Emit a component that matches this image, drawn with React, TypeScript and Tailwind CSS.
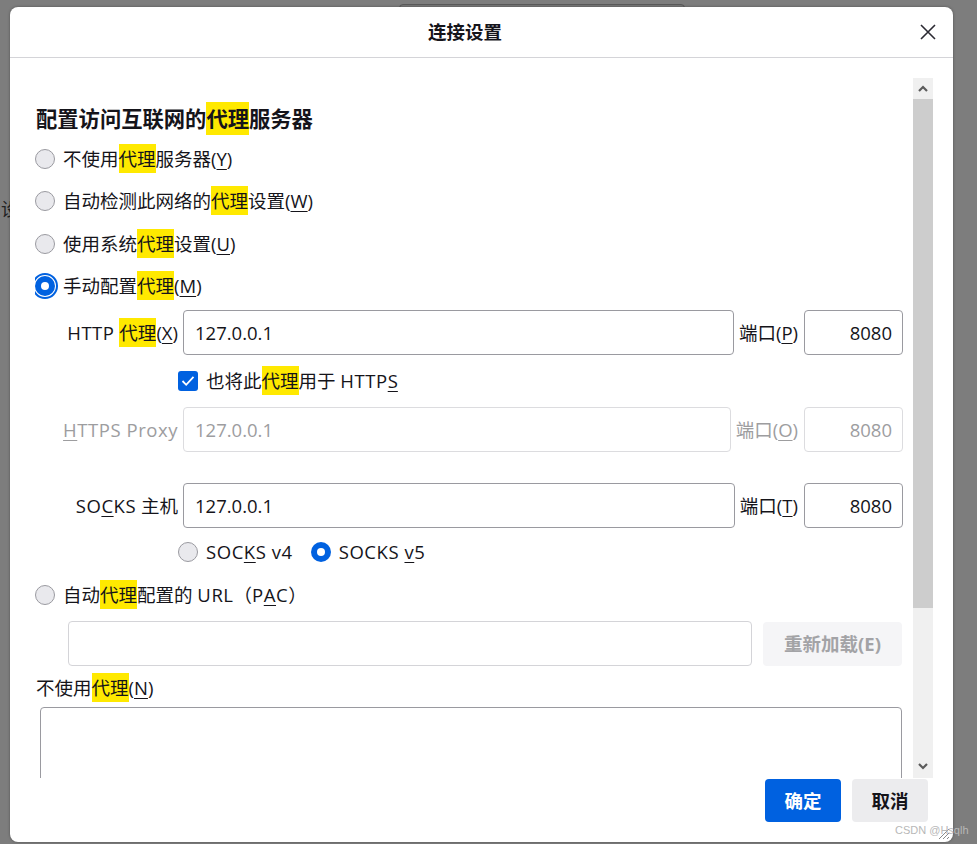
import React from "react";

const FONT = { fontFamily: '"Open Sans", "Noto Sans CJK SC", sans-serif' };

function Hl({ children }: { children: React.ReactNode }) {
  return <span className="bg-[#ffe900] py-[2px]">{children}</span>;
}

function U({ children }: { children: React.ReactNode }) {
  return <u className="underline underline-offset-[3px] decoration-1">{children}</u>;
}

function L({ children }: { children: React.ReactNode }) {
  return <span className="tracking-[0.55px]">{children}</span>;
}

function Radio({ checked = false, focus = false }: { checked?: boolean; focus?: boolean }) {
  if (checked) {
    return (
      <span
        className={
          "flex h-[20px] w-[20px] shrink-0 items-center justify-center rounded-full bg-[#0061e0] " +
          (focus ? "outline-2 outline-offset-1 outline-[#0061e0] outline" : "")
        }
      >
        <span className="h-[8px] w-[8px] rounded-full bg-white" />
      </span>
    );
  }
  return <span className="h-[20px] w-[20px] shrink-0 rounded-full border border-[#9a9aa0] bg-[#e9e9ed]" />;
}

function Chevron({ up }: { up: boolean }) {
  return (
    <svg width="10" height="7" viewBox="0 0 10 7">
      <path
        d={up ? "M1 6 L5 2 L9 6" : "M1 1 L5 5 L9 1"}
        fill="none"
        stroke="#5b5b5b"
        strokeWidth="2.2"
      />
    </svg>
  );
}

function ProxyRow({
  label,
  portLabel,
  disabled = false,
}: {
  label: React.ReactNode;
  portLabel: React.ReactNode;
  disabled?: boolean;
}) {
  const textColor = disabled ? "text-[#9d9d9f]" : "text-[#15141a]";
  const border = disabled ? "border-[#dcdcdf]" : "border-[#9a9aa0]";
  return (
    <div className={"flex h-[45px] items-center " + textColor}>
      <div className="w-[143px] shrink-0 text-right">{label}</div>
      <div
        className={
          "ml-[5px] flex h-[45px] flex-1 items-center rounded-[4px] border pl-[11px] " + border
        }
      >
        127.0.0.1
      </div>
      <div className="ml-[5px] shrink-0">{portLabel}</div>
      <div
        className={
          "ml-[6px] flex h-[45px] w-[99px] shrink-0 items-center justify-end rounded-[4px] border pr-[10px] " +
          border
        }
      >
        8080
      </div>
    </div>
  );
}

export default function App() {
  return (
    <div
      className="relative h-[844px] w-[977px] overflow-hidden bg-[#7d7d7d] pl-[10px] pt-[7px] text-[18.5px] text-[#15141a]"
      style={FONT}
    >
      {/* backdrop fragments */}
      <div className="absolute left-[399px] top-[4px] h-[20px] w-[286px] rounded-[4px] border border-[#5a5a5a] bg-[#777]" />
      <div className="absolute left-[1px] top-[196px] text-[18px] text-[#222]">设置</div>

      <div className="relative flex h-[835px] w-[943px] flex-col rounded-[8px] bg-white shadow-[0_0_3px_rgba(0,0,0,0.35)]">
        {/* header */}
        <div className="flex h-[51px] shrink-0 items-center border-b border-[#d4d4d8] pr-[17px]">
          <div className="flex-1 pb-[1px] text-center text-[18.5px] font-bold">连接设置</div>
          <svg width="16" height="16" viewBox="0 0 16 16">
            <path d="M1 1 L15 15 M15 1 L1 15" stroke="#2b2a33" strokeWidth="1.6" fill="none" />
          </svg>
        </div>

        {/* body */}
        <div className="flex shrink-0 pl-[25px] pr-[20px] pt-[20px]">
          <div className="h-[700px] w-[868px] overflow-hidden">
            <div className="h-[27px]" />
            <div className="flex h-[28px] items-center pl-[1px] text-[21.3px] font-bold">
              <span>
                配置访问互联网的<Hl>代理</Hl>服务器
              </span>
            </div>
            <div className="h-[4px]" />
            <div className="flex h-[43px] items-center gap-[8px]">
              <Radio />
              <span>
                不使用<Hl>代理</Hl>服务器(<U>Y</U>)
              </span>
            </div>
            <div className="flex h-[42px] items-center gap-[8px]">
              <Radio />
              <span>
                自动检测此网络的<Hl>代理</Hl>设置(<U>W</U>)
              </span>
            </div>
            <div className="flex h-[43px] items-center gap-[8px]">
              <Radio />
              <span>
                使用系统<Hl>代理</Hl>设置(<U>U</U>)
              </span>
            </div>
            <div className="flex h-[42px] items-center gap-[8px]">
              <Radio checked focus />
              <span>
                手动配置<Hl>代理</Hl>(<U>M</U>)
              </span>
            </div>

            <div className="h-[3px]" />
            <ProxyRow
              label={
                <>
                  <L>HTTP</L> <Hl>代理</Hl>(<U>X</U>)
                </>
              }
              portLabel={
                <>
                  端口(<U>P</U>)
                </>
              }
            />
            <div className="flex h-[52px] items-center pl-[143px]">
              <span className="flex h-[20px] w-[20px] items-center justify-center rounded-[3px] bg-[#0061e0]">
                <svg width="14" height="12" viewBox="0 0 14 12">
                  <path d="M1.5 6 L5.2 9.8 L12.5 1.8" fill="none" stroke="white" strokeWidth="1.8" />
                </svg>
              </span>
              <span className="ml-[8px]">
                也将此<Hl>代理</Hl>用于 <L>HTTP</L><U>S</U>
              </span>
            </div>
            <ProxyRow
              disabled
              label={
                <L>
                  <U>H</U>TTPS Proxy
                </L>
              }
              portLabel={
                <>
                  端口(<U>O</U>)
                </>
              }
            />
            <div className="h-[31px]" />
            <ProxyRow
              label={
                <>
                  <L>
                    SO<U>C</U>KS
                  </L>{" "}
                  主机
                </>
              }
              portLabel={
                <>
                  端口(<U>T</U>)
                </>
              }
            />
            <div className="flex h-[48px] items-center pl-[143px]">
              <Radio />
              <span className="ml-[8px]">
                <L>
                  SOC<U>K</U>S v4
                </L>
              </span>
              <span className="ml-[18px]">
                <Radio checked />
              </span>
              <span className="ml-[8px]">
                <L>
                  SOCKS <U>v</U>5
                </L>
              </span>
            </div>
            <div className="flex h-[38px] items-center gap-[8px]">
              <Radio />
              <span>
                自动<Hl>代理</Hl>配置的 <L>URL</L>（<L>P<U>A</U>C</L>）
              </span>
            </div>
            <div className="mt-[7px] flex h-[45px] items-center pl-[33px]">
              <div className="h-[45px] w-[684px] rounded-[4px] border border-[#d4d4d8]" />
              <div className="ml-[11px] flex h-[44px] w-[139px] items-center justify-center rounded-[4px] bg-[#f5f5f7] font-bold text-[#a3a3a6]">
                重新加载(E)
              </div>
            </div>
            <div className="mt-[11px] flex h-[22px] items-center pl-[1px]">
              <span>
                不使用<Hl>代理</Hl>(<U>N</U>)
              </span>
            </div>
            <div className="ml-[5px] mt-[8px] h-[120px] w-[862px] rounded-[4px] border border-[#9a9aa0]" />
          </div>

          {/* scrollbar */}
          <div className="ml-[10px] flex h-[700px] w-[20px] flex-col bg-[#f0f0f0]">
            <div className="flex h-[21px] items-center justify-center">
              <Chevron up />
            </div>
            <div className="h-[509px] bg-[#cdcdcd]" />
            <div className="flex-1" />
            <div className="flex h-[21px] items-center justify-center pb-[2px]">
              <Chevron up={false} />
            </div>
          </div>
        </div>

        {/* footer */}
        <div className="flex flex-1 justify-end gap-[11px] pr-[25px] pt-[1px]">
          <div className="flex h-[43px] w-[76px] items-center justify-center rounded-[4px] bg-[#0061e0] font-bold text-white">
            确定
          </div>
          <div className="flex h-[43px] w-[76px] items-center justify-center rounded-[4px] bg-[#ececee] font-bold text-[#15141a]">
            取消
          </div>
        </div>

        {/* resize grip */}
        <svg className="absolute bottom-[2px] right-[3px]" width="14" height="14" viewBox="0 0 14 14">
          <path d="M13 3 L3 13 M13 7 L7 13 M13 11 L11 13" stroke="#8a8a8a" strokeWidth="1" fill="none" />
        </svg>
      </div>

      {/* watermark */}
      <div className="absolute left-[895px] top-[822px] text-[11px] text-[#b8b8b8]" style={{ fontFamily: '"Liberation Sans", sans-serif' }}>
        CSDN @Hsqlh
      </div>
    </div>
  );
}
